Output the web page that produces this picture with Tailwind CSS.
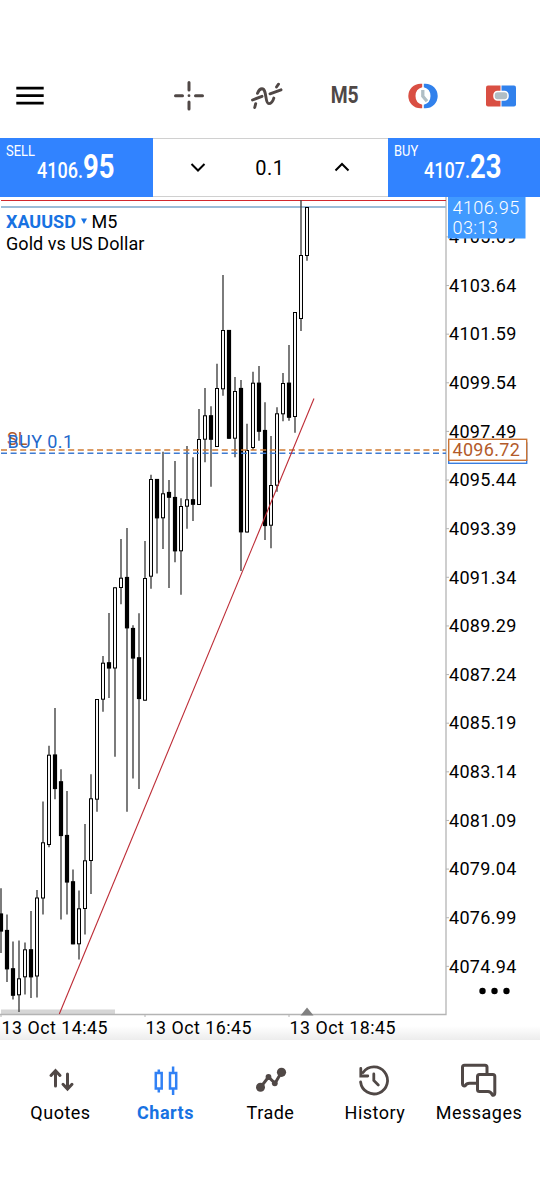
<!DOCTYPE html>
<html lang="en">
  <head>
    <meta charset="UTF-8" />
    <meta name="viewport" content="width=device-width, initial-scale=1.0" />
    <title>XAUUSD M5</title>
    <script src="https://cdn.jsdelivr.net/npm/@tailwindcss/browser@4"></script>
  </head>
  <body class="w-[540px] h-[1200px] overflow-hidden bg-white text-black font-[Roboto,sans-serif] flex flex-col">
    <!-- Toolbar -->
    <header class="h-[137px] pt-[54px] shrink-0 flex items-center">
      <svg class="w-[60px] h-10" viewBox="0 0 60 40" stroke="#000" stroke-width="2.800">
        <path d="M16.300 12.200h27.400M16.300 19.700h27.400M16.300 27.200h27.400" />
      </svg>
      <div class="w-[90px]"></div>
      <svg class="w-[78px] h-10" viewBox="0 0 78 40" fill="none" stroke="#504846" stroke-width="3" stroke-linecap="round">
        <path d="M25.500 19.700h7M45.500 19.700h7M39 6.500v7.500M39 26v7" />
        <circle cx="39" cy="19.700" r="1.400" fill="#504846" stroke="none" />
      </svg>
      <svg class="w-[78px] h-10" viewBox="0 0 78 40" fill="none" stroke="#504846" stroke-width="2.900" stroke-linecap="round">
        <path d="M24.500 24L34 20.300M42 17.800L53 13.800M26.700 31.500l1-3.800M29.500 17.300c1.200-3 2.700-4.500 4.500-4.500 5 0 2.800 14.800 6.800 14.800 2.200 0 4-2 5-5.500M48.500 11l2-2.800" />
      </svg>
      <div class="w-[78px] text-center text-[23px] leading-10 font-bold text-[#504846]"><span class="inline-block scale-x-[.84]">M5</span></div>
      <svg class="w-[78px] h-10" viewBox="0 0 78 40" fill="none">
        <path d="M38.200 7.800h-1.700a12.200 12.200 0 0 0 0 24.400h1.700v-3.500a9 9 0 0 1 0-17.400z" fill="#d94f43" />
        <path d="M39.800 7.800h1.700a12.200 12.200 0 0 1 0 24.400h-1.700v-3.500a9 9 0 0 0 0-17.400z" fill="#3181ec" />
        <path d="M38.800 14v6.200l4.200 5" stroke="#b0bec5" stroke-width="3.300" />
      </svg>
      <svg class="w-[78px] h-10" viewBox="0 0 78 40">
        <path d="M26 9.500h12.500v21H26a2 2 0 0 1-2-2v-17a2 2 0 0 1 2-2z" fill="#d94f43" />
        <path d="M39.500 9.500H52a2 2 0 0 1 2 2v17a2 2 0 0 1-2 2H39.500z" fill="#3181ec" />
        <rect x="32" y="15.500" width="14" height="8.500" rx="3.500" fill="#b0bec5" stroke="#fff" stroke-width="1.500" />
      </svg>
    </header>

    <!-- One click trading -->
    <section class="h-[60px] pt-[.5px] shrink-0 flex">
      <div class="w-[152.5px] bg-[#3183ff] text-white pl-[6px] pt-[5px]">
        <div class="text-[15px] leading-4"><span class="inline-block origin-left scale-x-[.86]">SELL</span></div>
        <div class="pl-[31px] -mt-[9px] leading-[34px] whitespace-nowrap">
          <span class="inline-block origin-left scale-x-[.82] font-medium"><span class="text-[22px]">4106.</span><span class="text-[33.5px] font-bold">95</span></span>
        </div>
      </div>
      <div class="w-[235px] border-y border-[#d0d0d0] flex items-center justify-between px-[37px]">
        <svg class="w-4 h-4" viewBox="0 0 16 16" fill="none" stroke="#000" stroke-width="2"><path d="M1.500 5l6.500 6.500L14.500 5" /></svg>
        <div class="text-xl tracking-wide pt-px">0.1</div>
        <svg class="w-4 h-4" viewBox="0 0 16 16" fill="none" stroke="#000" stroke-width="2"><path d="M1.500 11.500L8 5l6.500 6.500" /></svg>
      </div>
      <div class="w-[152.5px] bg-[#3183ff] text-white pl-[6px] pt-[5px]">
        <div class="text-[15px] leading-4"><span class="inline-block origin-left scale-x-[.86]">BUY</span></div>
        <div class="pl-[30.5px] -mt-[9px] leading-[34px] whitespace-nowrap">
          <span class="inline-block origin-left scale-x-[.82] font-medium"><span class="text-[22px]">4107.</span><span class="text-[33.5px] font-bold">23</span></span>
        </div>
      </div>
    </section>

    <!-- Chart, time scale included -->
    <main class="h-[843px] shrink-0 relative">
      <svg id="chart" class="block w-[540px] h-[843px]" viewBox="0 197 540 843" font-size="18">
        <defs>
          <linearGradient id="shade" x1="0" x2="0" y1="0" y2="1">
            <stop offset="0" stop-color="#fff" />
            <stop offset="1" stop-color="#ebebeb" />
          </linearGradient>
        </defs>
        <rect x="0" y="1026" width="540" height="15" fill="url(#shade)" />
        <rect x="1" y="1009.500" width="114" height="4.500" fill="#d6d6d6" />
        <path d="M0 1014.500H446V197" fill="none" stroke="#b4b4b4" stroke-width="1.300" />
        <path d="M1 207H446" stroke="#9bbcd8" stroke-width="2" />
        <path d="M1 200.500H446" stroke="#d0282e" stroke-width="1.200" />
        <g id="candles"></g>
        <path d="M1 450H446" stroke="#cf7c35" stroke-width="1.500" stroke-dasharray="6 3.600" />
        <path d="M1 453.300H446" stroke="#3e7bd2" stroke-width="1.500" stroke-dasharray="6 3.600" />
        <path d="M59.300 1014L314 398.500" stroke="#bd2b35" stroke-width="1.100" />
        <path d="M300.500 1015.500l6.500-8 6.500 8z" fill="#808080" />
        <g id="prices" letter-spacing=".3"></g>
        <g id="times" letter-spacing=".5"></g>
        <rect x="448" y="197" width="77.500" height="41.500" fill="#419aff" />
        <g fill="#fff" font-weight="300" letter-spacing=".4">
          <text x="452.500" y="213.500">4106.95</text>
          <text x="452.500" y="234">03:13</text>
        </g>
        <rect x="448.700" y="443" width="78" height="20.300" fill="#fff" stroke="#397ee0" stroke-width="1.400" />
        <rect x="448.700" y="439.300" width="78" height="21" fill="#fff" stroke="#cb7434" stroke-width="1.400" />
        <text x="452.500" y="456.300" fill="#b35b2a" letter-spacing=".3">4096.72</text>
        <text x="7" y="444.500" fill="#b35b2a">SL</text>
        <text x="7.500" y="448" fill="#2268cb" letter-spacing=".4">BUY 0.1</text>
        <text x="6" y="227.500" font-weight="700" fill="#1872e2">XAUUSD</text>
        <path d="M81 218.500h6l-3 5.500z" fill="#1872e2" />
        <text x="91.500" y="227.500">M5</text>
        <text x="6" y="249.500" letter-spacing=".05">Gold vs US Dollar</text>
        <g><circle cx="482.500" cy="991" r="3.200" /><circle cx="494.500" cy="991" r="3.200" /><circle cx="506.500" cy="991" r="3.200" /></g>
      </svg>
    </main>

    <!-- Bottom navigation -->
    <nav class="flex-1 pt-[21px] pl-2 flex text-lg leading-6 tracking-[.5px]">
      <a class="w-[105px] flex flex-col items-center">
        <svg class="w-10 h-10" viewBox="0 0 40 40" fill="none" stroke="#504846" stroke-width="3" stroke-linecap="round"><path d="M14.500 25V10.500M10 14.500l4.500-4.800 4.500 4.800M26.500 13v14M22 23.300l4.500 4.800 4.500-4.800" /></svg>
        <span>Quotes</span>
      </a>
      <a class="w-[105px] flex flex-col items-center text-[#1872e2] font-bold">
        <svg class="w-10 h-10" viewBox="0 0 40 40" fill="none" stroke="#3181f5" stroke-width="2.500"><path d="M9.800 12h5.900v15.500H9.800zM24 12h6.200v15.500H24zM12.800 8.500v3M12.800 28v3.500M27.100 5.500v6M27.100 28v6" /></svg>
        <span>Charts</span>
      </a>
      <a class="w-[105px] flex flex-col items-center">
        <svg class="w-10 h-10" viewBox="0 0 40 40" fill="#504846"><path d="M9.500 26.300l8-10.300 6.500 6.300 6.500-11" fill="none" stroke="#504846" stroke-width="3" /><circle cx="9.500" cy="26.300" r="4.500" /><circle cx="17.500" cy="16" r="2.900" /><circle cx="23.800" cy="22.300" r="2.900" /><circle cx="30.500" cy="11.300" r="4.600" /></svg>
        <span>Trade</span>
      </a>
      <a class="w-[104px] flex flex-col items-center">
        <svg class="w-10 h-10" viewBox="0 0 40 40" fill="none" stroke="#504846" stroke-width="2.800" stroke-linecap="round"><path d="M5.600 21a13.500 13.500 0 1 0 2.500-9.500M5.800 7.500v7.500h7M18.800 13v6.500l4.500 4.500" /></svg>
        <span>History</span>
      </a>
      <a class="w-[104px] flex flex-col items-center">
        <svg class="w-10 h-10" viewBox="0 0 40 40" fill="none" stroke="#504846" stroke-width="3" stroke-linejoin="round"><path d="M17 22.300h-6.500q-3 0-4.300 2.500-2.700.500-2.700-2V6.200q0-2 2-2H26q2 0 2 2V13M20.500 13.500h13.300q2 0 2 2V32q0 2.800-2.300 2.200-1.500-3.700-4.500-3.700h-8.500q-2 0-2-2v-13q0-2 2-2z" /></svg>
        <span>Messages</span>
      </a>
    </nav>

    <script>
      // [wick top, body top, body bottom, wick bottom, filled]
      const candles = [
        [888.3, 913.5, 931.5, 953, 1], [914.5, 930, 969.3, 982, 1], [941.5, 968.3, 995.7, 999.5, 1],
        [940.5, 978.3, 995.3, 1012, 0], [942.5, 949.3, 977.3, 994.5, 0], [911, 949.3, 977.3, 998, 1],
        [890, 897.5, 976.5, 997.5, 0], [801.5, 842.3, 898.5, 914.5, 0], [745.7, 754.7, 845, 847.3, 0],
        [708, 754.5, 789, 799.3, 1], [769.3, 781.3, 836, 919.5, 1], [791, 835, 882.5, 914.5, 1],
        [869.5, 881.3, 944.3, 944.3, 1], [890.5, 908.3, 944.3, 959.5, 0], [824, 860.3, 909, 934.5, 0],
        [774.3, 798.3, 861, 894, 0], [699, 699, 799.7, 811.7, 0], [656, 662.7, 699.7, 711.7, 0],
        [613, 662.3, 668.5, 698, 1], [587.3, 587.3, 668.5, 756.7, 0], [539, 577.7, 588, 604.3, 0],
        [528, 577, 628.3, 811.7, 1], [625.3, 628, 658.5, 778.5, 1], [613.3, 657.3, 699, 789, 1],
        [541, 578, 700.7, 700.7, 0], [474.7, 479, 576.7, 588.7, 0], [479, 479, 518.3, 573.5, 1],
        [451.7, 493.3, 518.3, 549, 0], [480, 492, 497.7, 588, 1], [461, 497, 551.3, 562.3, 1],
        [498.3, 506, 551.3, 594.7, 0], [446, 499.3, 506.7, 528.7, 0], [457.3, 499.3, 504.7, 521, 1],
        [409, 439, 505, 505, 0], [388, 415.3, 439.7, 462.3, 0], [406.3, 415.3, 439.7, 486.7, 1],
        [363.7, 388, 447, 447, 0], [275, 330, 389.3, 395.7, 0], [330, 330, 438.7, 438.7, 1],
        [377, 391, 438.7, 457.3, 0], [380, 388, 532.3, 571, 1], [423.7, 450, 532.5, 532.5, 0],
        [371.7, 382.7, 448, 450, 0], [366, 382.7, 431.7, 440.7, 1], [402.3, 430, 526, 540, 1],
        [436, 485, 525.7, 548.3, 0], [407.3, 413.3, 485.7, 491.7, 0], [373, 383, 414.3, 421.3, 0],
        [345, 382.7, 417.7, 420.7, 1], [312, 312, 417, 432.7, 0], [200, 255, 319, 331, 0],
        [207, 207, 256, 260.7, 0],
      ];

      document.getElementById("candles").innerHTML = candles
        .map(([high, top, bottom, low, filled], i) => {
          const x = 1 + i * 6;
          return `<path d="M${x} ${high}V${low}" stroke="#444" stroke-width="1.4" />
            <rect x="${x - 1.5}" y="${top + 0.5}" width="3" height="${bottom - top - 1}"
              fill="${filled ? "#000" : "#f8f8f8"}" stroke="#000" stroke-width="${filled ? 1.2 : 1}" />`;
        })
        .join("");

      // Price scale, one label every 2.05
      let prices = "";
      for (let i = 0; i < 16; i++) {
        const y = 236.9 + i * 48.63;
        prices += `<path d="M446 ${y}h3" stroke="#b4b4b4" />
          <text x="449" y="${y + 6.2}">${(4105.69 - i * 2.05).toFixed(2)}</text>`;
      }
      document.getElementById("prices").innerHTML = prices;

      document.getElementById("times").innerHTML = ["14:45", "16:45", "18:45"]
        .map((time, i) => `<path d="M${1 + i * 144} 1014v3" stroke="#b4b4b4" />
          <text x="${1.5 + i * 144}" y="1033.700" font-size="17.800">13 Oct ${time}</text>`)
        .join("");
    </script>
  </body>
</html>
